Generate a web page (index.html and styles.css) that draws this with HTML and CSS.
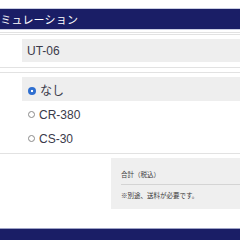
FILE: index.html
```html
<!DOCTYPE html>
<html lang="ja">
<head>
<meta charset="utf-8">
<link rel="stylesheet" href="styles.css">
</head>
<body>
<div class="page">
  <div class="header"><span class="title">シミュレーション</span></div>
  <div class="rule rule-a"></div>
  <div class="rule rule-b"></div>
  <div class="model">UT-06</div>
  <div class="rule rule-c"></div>
  <div class="rule rule-d"></div>
  <ul class="options">
    <li class="option selected"><span class="radio on"></span><span class="label">なし</span></li>
    <li class="option"><span class="radio"></span><span class="label">CR-380</span></li>
    <li class="option"><span class="radio"></span><span class="label">CS-30</span></li>
  </ul>
  <div class="rule rule-e"></div>
  <div class="summary-wrap">
    <div class="summary">
      <div class="sum-row total">合計（税込）</div>
      <div class="sum-row note">※別途、送料が必要です。</div>
    </div>
  </div>
  <div class="footer"></div>
</div>
</body>
</html>
```
FILE: styles.css
```css
html, body {
  margin: 0;
  padding: 0;
  background: #ffffff;
}
.page {
  width: 240px;
  height: 240px;
  overflow: hidden;
  padding-top: 8px;
  box-sizing: border-box;
  font-family: "Liberation Sans", "Noto Sans CJK JP", sans-serif;
  color: #3a3a4a;
}
.header {
  height: 20px;
  background: #1a1e66;
  border-top: 1px solid #c9cde2;
  border-bottom: 1px solid #c9cde2;
  overflow: hidden;
  white-space: nowrap;
}
.title {
  display: block;
  color: #ffffff;
  font-family: "Noto Sans CJK JP", sans-serif;
  font-size: 11px;
  line-height: 20px;
  text-indent: -11px;
  letter-spacing: 0.2px;
}
.rule {
  height: 1px;
  background: #e2e2e2;
}
.rule-a { margin-top: 2px; }
.rule-b { margin-top: 1px; }
.model {
  margin: 4px 0 0 22px;
  height: 23px;
  line-height: 24px;
  background: #eeeeee;
  padding-left: 5px;
  font-size: 12px;
}
.rule-c { margin-top: 5px; }
.rule-d { margin-top: 4px; }
.options {
  list-style: none;
  margin: 4px 0 0 22px;
  padding: 0;
}
.option {
  height: 24px;
  box-sizing: border-box;
  padding-top: 3px;
  display: flex;
  align-items: center;
  gap: 4px;
  padding-left: 6px;
  font-size: 12px;
}
.option.selected {
  background: #eeeeee;
}
.radio {
  width: 7px;
  height: 7px;
  border-radius: 50%;
  border: 1px solid #8a8a8a;
  box-sizing: border-box;
  background: #ffffff;
  flex: none;
}
.radio.on {
  width: 8px;
  height: 8px;
  border: none;
  background: radial-gradient(circle, #ffffff 0 1px, #2f6fd0 1.6px);
}
.label {
  line-height: 14px;
}
.rule-e { margin-top: 4px; }
.summary-wrap {
  margin-top: 4px;
  padding-left: 111px;
}
.summary {
  height: 51px;
  background: #efefef;
  padding: 0 0 0 10px;
  box-sizing: border-box;
  font-family: "Noto Sans CJK JP", sans-serif;
  font-size: 6.5px;
  color: #3a3a3a;
}
.sum-row {
  line-height: 10px;
}
.total {
  padding-top: 11px;
  padding-bottom: 5px;
  border-bottom: 1px solid #d4d4d4;
}
.note {
  padding-top: 5px;
}
.footer {
  margin-top: 19px;
  height: 20px;
  background: #1a1e66;
  border-top: 1px solid #9ea3c6;
}
```
